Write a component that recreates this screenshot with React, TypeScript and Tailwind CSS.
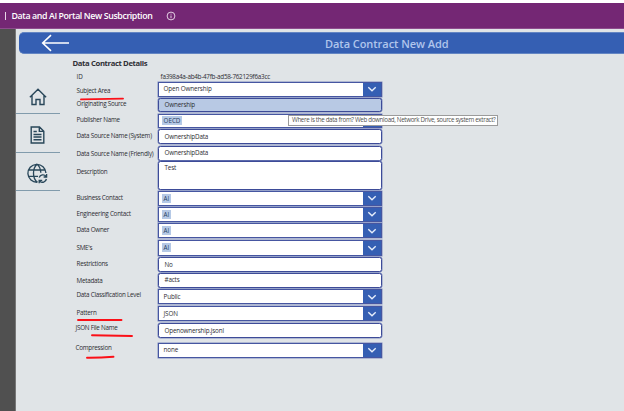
import type { ReactNode } from 'react';

type Kind = 'select' | 'people' | 'input' | 'disabled';

interface RowData {
  label: string;
  value: string;
  kind: Kind;
  row: string;
  box: string;
  offset: string;
  text?: string;
  mark?: ReactNode;
}

function Mark({ className, d, w }: { className: string; d: string; w: number }) {
  return (
    <svg className={`absolute ${className}`} width={w} height="4" viewBox={`0 0 ${w} 4`} fill="none">
      <path d={d} stroke="#fb1018" strokeWidth="1.9" strokeLinecap="round" />
    </svg>
  );
}

const rows: RowData[] = [
  { label: 'Subject Area', value: 'Open Ownership', kind: 'select', row: 'h-[15.5px]', box: 'h-[14.5px]', offset: 'mt-[4px]', mark: <Mark className="left-[3px] top-[10.5px]" w={45} d="M1 2.4L43 1.6" /> },
  { label: 'Originating Source', value: 'Ownership', kind: 'disabled', row: 'h-[16px]', box: 'h-[14.5px]', offset: 'mt-[1.5px]' },
  { label: 'Publisher Name', value: 'OECD', kind: 'people', row: 'h-[15.5px]', box: 'h-[14.5px]', offset: 'mt-[1.5px]' },
  { label: 'Data Source Name (System)', value: 'OwnershipData', kind: 'input', row: 'h-[17px]', box: 'h-[15px]', offset: 'mt-[1.5px]' },
  { label: 'Data Source Name (Friendly)', value: 'OwnershipData', kind: 'input', row: 'h-[15px]', box: 'h-[14.5px]', offset: 'mt-[2.5px]' },
  { label: 'Description', value: 'Test', kind: 'input', row: 'h-[30px]', box: 'h-[29px]', offset: 'mt-[6px]', text: 'items-start pt-[1px]' },
  { label: 'Business Contact', value: 'AI', kind: 'people', row: 'h-[16px]', box: 'h-[14.5px]', offset: 'mt-[2px]' },
  { label: 'Engineering Contact', value: 'AI', kind: 'people', row: 'h-[16px]', box: 'h-[14.5px]', offset: 'mt-[1.5px]' },
  { label: 'Data Owner', value: 'AI', kind: 'people', row: 'h-[17px]', box: 'h-[15px]', offset: 'mt-[2px]' },
  { label: "SME's", value: 'AI', kind: 'people', row: 'h-[17px]', box: 'h-[15.5px]', offset: 'mt-[2.5px]' },
  { label: 'Restrictions', value: 'No', kind: 'input', row: 'h-[16px]', box: 'h-[15px]', offset: 'mt-[2px]' },
  { label: 'Metadata', value: '#acts', kind: 'input', row: 'h-[16px]', box: 'h-[14.5px]', offset: 'mt-[3px]' },
  { label: 'Data Classification Level', value: 'Public', kind: 'select', row: 'h-[17px]', box: 'h-[15px]', offset: 'mt-[0.5px]' },
  { label: 'Pattern', value: 'JSON', kind: 'select', row: 'h-[17px]', box: 'h-[15px]', offset: 'mt-[1.5px]', mark: <Mark className="left-0 top-[10px]" w={46} d="M1 2H44.5" /> },
  { label: 'JSON File Name', value: 'Openownership.jsonl', kind: 'input', row: 'h-[19.5px]', box: 'h-[15px]', offset: 'mt-0 -ml-[1px]', mark: <Mark className="left-[15px] top-[11px]" w={43} d="M1 1.2L41 2" /> },
  { label: 'Compression', value: 'none', kind: 'select', row: 'h-[16px]', box: 'h-[15px]', offset: 'mt-[0.5px] -ml-[1px]', mark: <Mark className="left-[10px] top-[11.5px]" w={30} d="M1 2.7Q14 2.8 27.5 1.8" /> },
];

function Chevron() {
  return (
    <span className="flex h-full w-[18px] shrink-0 items-center justify-center bg-[#355fb3]">
      <svg width="10" height="6" viewBox="0 0 10 6" fill="none">
        <path d="M1.3 1.2L5 4.7L8.7 1.2" stroke="#e6eefb" strokeWidth="1.4" />
      </svg>
    </span>
  );
}

function Field({ data }: { data: RowData }) {
  const { kind, value, box, text = 'items-center' } = data;
  if (kind === 'input' || kind === 'disabled') {
    return (
      <div className={`flex w-[224px] rounded-[2.5px] border border-[#3d4b98] pl-[6px] tracking-[-0.17px] shadow-[0_0_0_0.5px_#7f8bbf] ${text} ${box} ${kind === 'disabled' ? 'bg-[#b8c9e4]' : 'bg-white'}`}>
        {value}
      </div>
    );
  }
  return (
    <div className={`flex w-[224px] items-center border border-[#4656a1] bg-white tracking-[-0.12px] shadow-[0_0_0_0.5px_#7f8bbf] ${box}`}>
      {kind === 'people' ? (
        <span className="ml-[3px] bg-[#b5c9e6] px-[2px] font-medium leading-[9px] tracking-normal text-[#273c5f]">{value}</span>
      ) : (
        <span className="ml-[5px]">{value}</span>
      )}
      <span className="flex-1" />
      <Chevron />
    </div>
  );
}

function HomeIcon() {
  return (
    <svg width="18" height="18" viewBox="0 0 18 18" fill="none" stroke="#29475a" strokeWidth="1.4">
      <path d="M.9 9.2L9 1.2L17.1 9.2M3 7.5V16.5H7V11.5H11V16.5H15V7.5" />
    </svg>
  );
}

function DocumentIcon() {
  return (
    <svg width="15" height="18" viewBox="0 0 15 18" fill="none" stroke="#29475a" strokeWidth="1.4">
      <path d="M1.2 1H9.5L13.8 5.2V17H1.2ZM9.3 1V5.4H13.8M3.5 5.5H6.8M3.5 8.5H11.5M3.5 11H11.5M3.5 13.7H11.5" />
    </svg>
  );
}

function GlobeIcon() {
  return (
    <svg width="21" height="21" viewBox="0 0 21 21" fill="none" stroke="#29475a" strokeWidth="1.35">
      <path d="M10.5 19.3A9 9 0 1 1 18.9 10M10.5 19.3C8 17.5 6.5 14.5 6.5 10.2S8 3 10 1.2C12.5 3 13.7 6 13.8 9.8M1.6 7H18.3M1.6 13.3H11" />
      <path d="M12.2 14.5A4 4 0 0 1 19 13.2M19.6 11V14H16.6M19.4 16A4 4 0 0 1 12.8 18.2M12.2 20.2V17.3H15.2" />
    </svg>
  );
}

export default function App() {
  return (
    <div className="flex h-[411px] w-[624px] flex-col overflow-hidden bg-[#e0e4e7] font-['Open_Sans',sans-serif] text-[#2d2d33]">
      <header className="flex h-[29px] shrink-0 items-center border-t-[3px] border-b border-t-white border-b-[#8e4c8d] bg-[#742774] text-white">
        <span className="ml-[5px] h-[8px] w-px bg-[#e7d7e7]" />
        <h1 className="ml-[5.5px] w-[141.5px] whitespace-nowrap text-[8.8px] font-semibold leading-[12px] tracking-[-0.38px]">Data and AI Portal New Susbcription</h1>
        <svg className="ml-[13px]" width="10" height="10" viewBox="0 0 10 10" fill="none" stroke="#eee0ee" strokeWidth=".9">
          <circle cx="5" cy="5" r="3.9" />
          <path d="M5 4.5V7.2M5 2.7V3.6" />
        </svg>
      </header>
      <div className="flex min-h-0 flex-1">
        <div className="w-[15.5px] shrink-0 border-r border-[#777] bg-[#505050]" />
        <div className="flex min-w-0 flex-1 flex-col pt-[3px]">
          <div className="ml-[3px] flex h-[22px] shrink-0 items-center rounded-l-[5px] border-y border-[#6385c3] bg-[#355fb3]">
            <svg className="ml-[22.5px] shrink-0" width="30" height="18" viewBox="0 0 30 18" fill="none" stroke="white" strokeWidth="1.6">
              <path d="M1.5 9H28M10 1.2L1.7 9L10 16.8" />
            </svg>
            <h2 className="ml-[254px] whitespace-nowrap text-[11px] font-semibold leading-[15px] tracking-[-0.05px] text-[#b0c5ec]">Data Contract New Add</h2>
          </div>
          <div className="flex">
            <nav className="flex w-[44px] shrink-0 flex-col pt-[22px]">
              <div className="flex h-[38px] items-end justify-center border-b border-[#819bac] pb-[7px]"><HomeIcon /></div>
              <div className="flex h-[38.5px] items-end justify-center border-b border-[#819bac] pb-[8px]"><DocumentIcon /></div>
              <div className="flex h-[38.5px] items-end justify-center border-b border-[#819bac] pb-[6px]"><GlobeIcon /></div>
            </nav>
            <main className="ml-[13px] pt-[4px] text-[6.3px] leading-[10px]">
              <h3 className="h-[14px] text-[7.7px] font-bold leading-[11px] tracking-[-0.37px] text-[#303036]">Data Contract Details</h3>
              <div className="flex h-[10px] pl-[4px]">
                <span className="w-[84px] shrink-0">ID</span>
                <span className="whitespace-nowrap tracking-[-0.24px]">fa398a4a-ab4b-47fb-ad58-762129f6a3cc</span>
              </div>
              {rows.map((r) => (
                <div key={r.label} className={`flex items-start pl-[4px] ${r.row}`}>
                  <div className="w-[81px] shrink-0">
                    <div className={`relative whitespace-nowrap tracking-[-0.25px] ${r.offset}`}>
                      {r.label}
                      {r.mark}
                    </div>
                  </div>
                  <div className="relative">
                    <Field data={r} />
                    {r.label === 'Publisher Name' && (
                      <div className="absolute left-[130.5px] top-[1px] z-10 flex h-[11.5px] w-[209.5px] items-center whitespace-nowrap border border-[#9b9b9b] bg-white pl-[3px] text-[6.2px] tracking-[-0.32px] text-[#505050]">
                        Where is the data from? Web download, Network Drive, source system extract?
                      </div>
                    )}
                  </div>
                </div>
              ))}
            </main>
          </div>
        </div>
      </div>
    </div>
  );
}
